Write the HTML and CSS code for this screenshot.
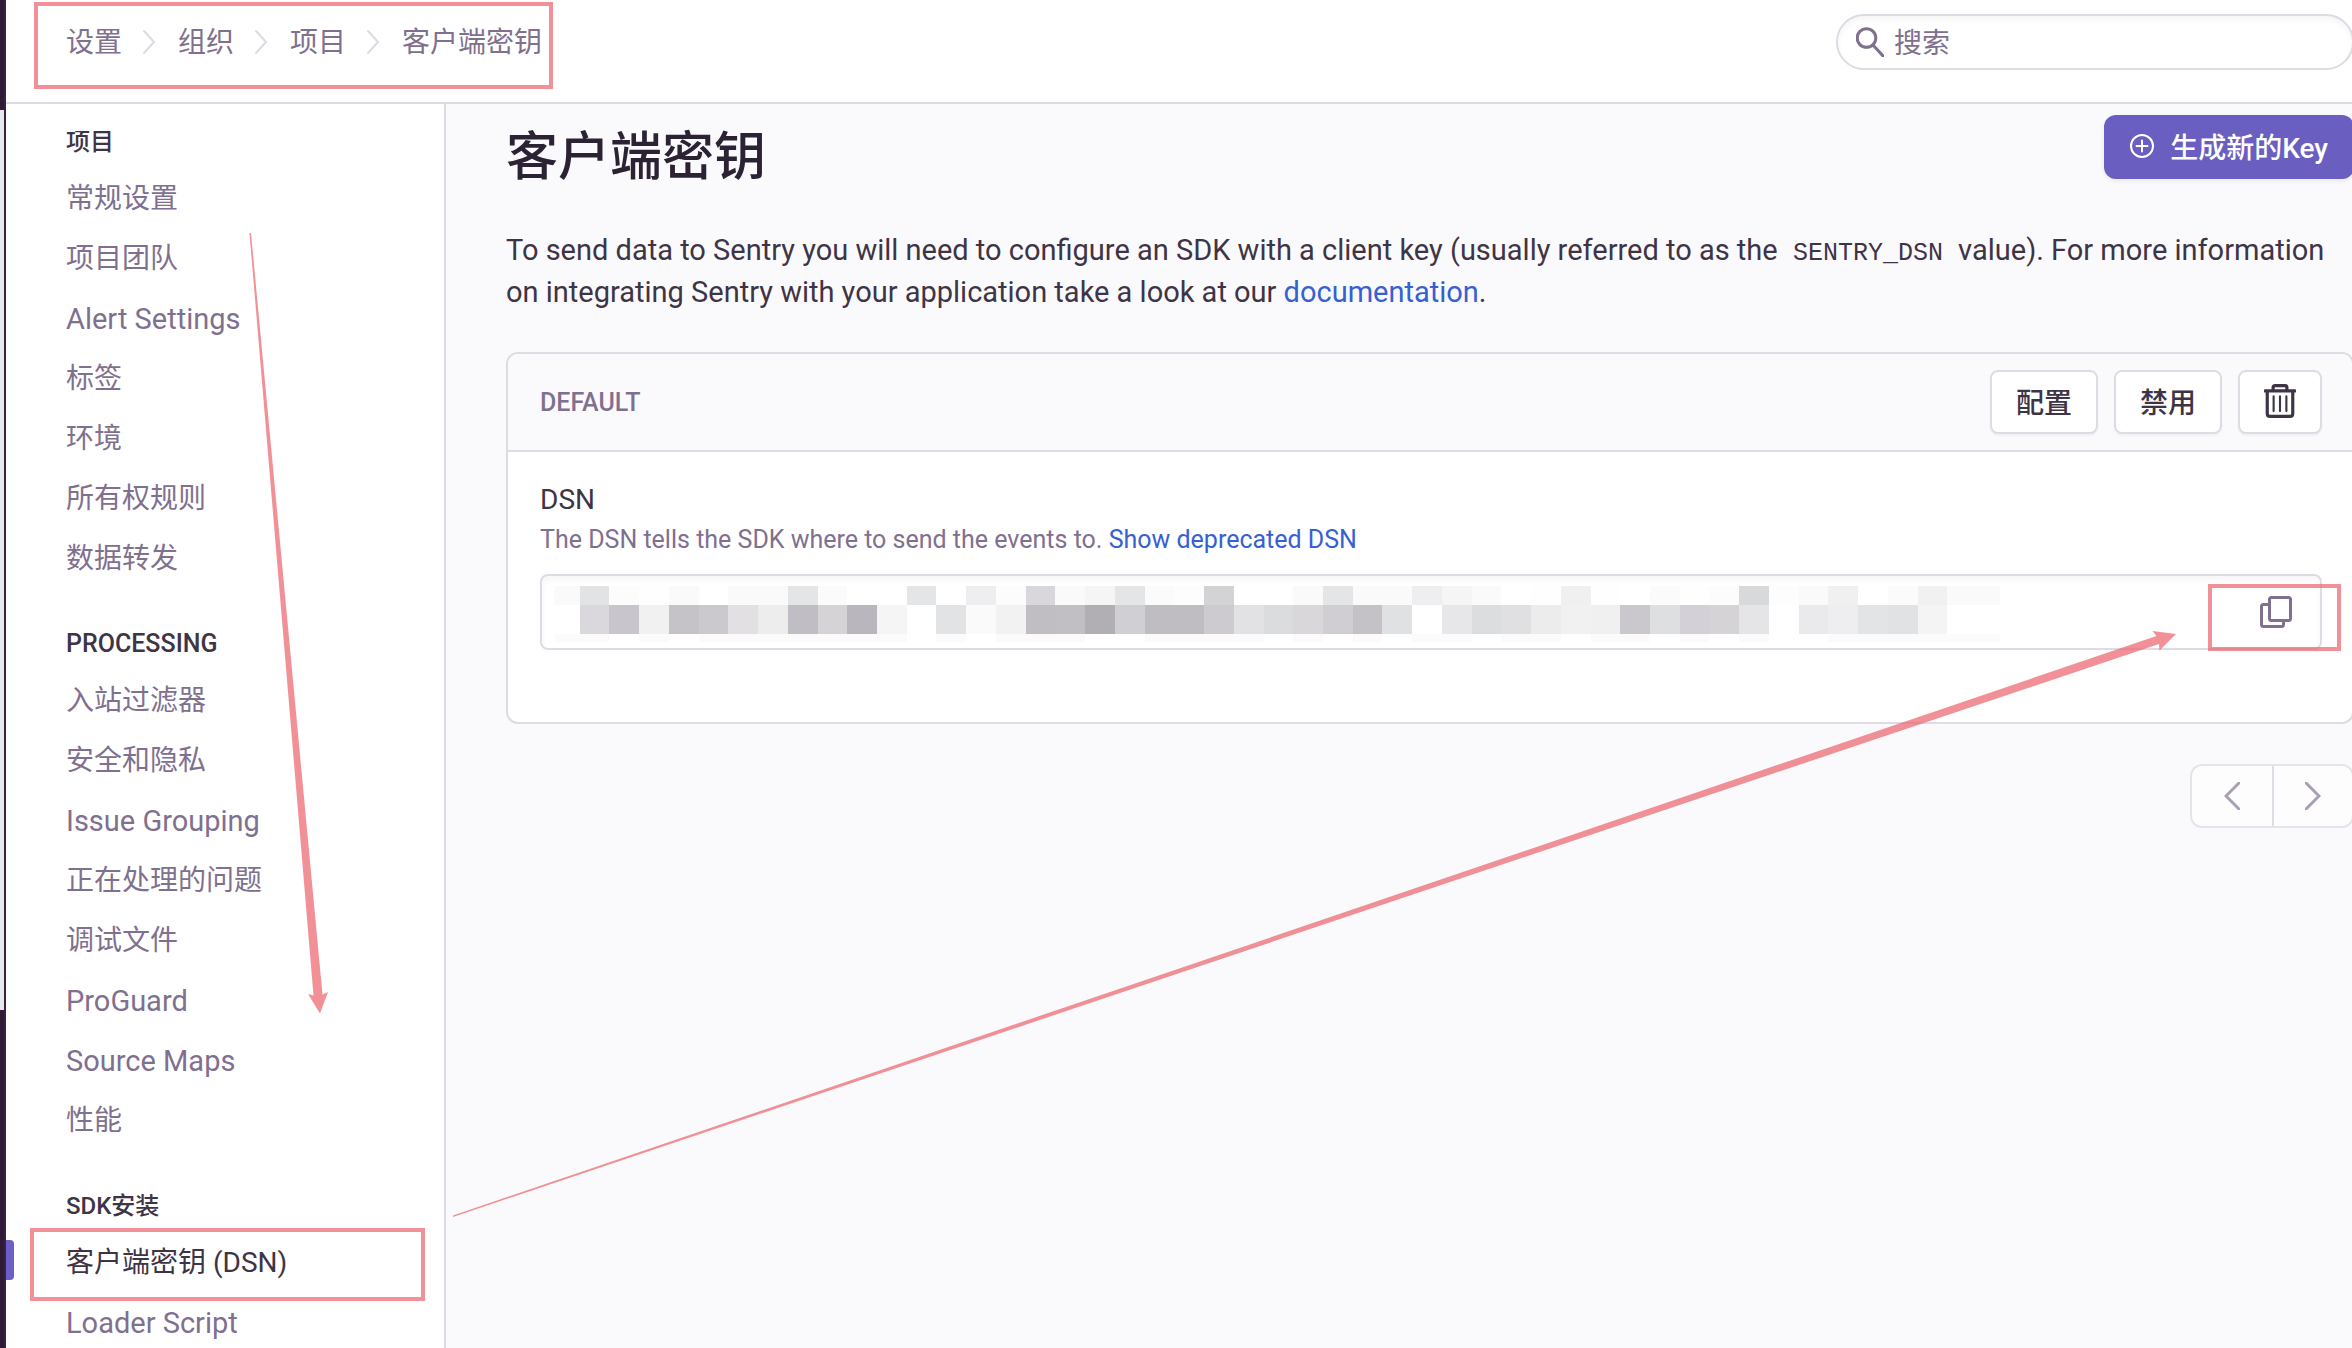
FILE: index.html
```
<!DOCTYPE html>
<html lang="zh-CN">
<head>
<meta charset="utf-8">
<title>客户端密钥</title>
<link rel="stylesheet" href="styles.css">
</head>
<body>
<div class="app">
  <div class="rail"><div class="rail-gap"></div></div>
  <div class="page">
    <header class="topbar">
      <nav class="crumbs" aria-label="路径">
        <a href="#">设置</a>
        <svg class="crumb-sep" viewBox="0 0 14 26"><path d="M2 2l10 11L2 24"/></svg>
        <a href="#">组织</a>
        <svg class="crumb-sep" viewBox="0 0 14 26"><path d="M2 2l10 11L2 24"/></svg>
        <a href="#">项目</a>
        <svg class="crumb-sep" viewBox="0 0 14 26"><path d="M2 2l10 11L2 24"/></svg>
        <a href="#">客户端密钥</a>
      </nav>
      <label class="search">
        <svg class="search-icon" viewBox="0 0 28 30"><circle cx="10.500" cy="11" r="9.300"/><path d="M17 18l10 11"/></svg>
        <input type="text" placeholder="搜索" aria-label="搜索">
      </label>
    </header>
    <div class="body">
      <nav class="sidebar" aria-label="项目设置">
        <h2>项目</h2>
        <ul>
          <li><a href="#">常规设置</a></li>
          <li><a href="#">项目团队</a></li>
          <li><a class="latin" href="#">Alert Settings</a></li>
          <li><a href="#">标签</a></li>
          <li><a href="#">环境</a></li>
          <li><a href="#">所有权规则</a></li>
          <li><a href="#">数据转发</a></li>
        </ul>
        <h2 class="latin">PROCESSING</h2>
        <ul>
          <li><a href="#">入站过滤器</a></li>
          <li><a href="#">安全和隐私</a></li>
          <li><a class="latin" href="#">Issue Grouping</a></li>
          <li><a href="#">正在处理的问题</a></li>
          <li><a href="#">调试文件</a></li>
          <li><a class="latin" href="#">ProGuard</a></li>
          <li><a class="latin" href="#">Source Maps</a></li>
          <li><a href="#">性能</a></li>
        </ul>
        <h2>SDK安装</h2>
        <ul>
          <li><a class="active" href="#" aria-current="page">客户端密钥 (DSN)</a></li>
          <li><a class="latin" href="#">Loader Script</a></li>
        </ul>
      </nav>
      <main class="content">
        <div class="title-row">
          <h1>客户端密钥</h1>
          <button class="primary" type="button">
            <svg class="plus-icon" viewBox="0 0 24 24"><circle cx="12" cy="12" r="11"/><path d="M12 6.500v11M6.500 12h11"/></svg>
            生成新的Key
          </button>
        </div>
        <p class="intro">To send data to Sentry you will need to configure an SDK with a client key (usually referred to as the <code>SENTRY_DSN</code> value). For more information on integrating Sentry with your application take a look at our <a href="#">documentation</a>.</p>
        <section class="panel">
          <div class="panel-head">
            <h3>DEFAULT</h3>
            <div class="actions">
              <button class="btn" type="button">配置</button>
              <button class="btn" type="button">禁用</button>
              <button class="btn" type="button" aria-label="删除">
                <svg class="trash-icon" viewBox="0 0 30 32"><path d="M1 6.500h28M8.500 6V3.500Q8.500 1.500 10.500 1.500h9Q21.500 1.500 21.500 3.500V6M3 7v21q0 2.500 2.500 2.500h19q2.500 0 2.500-2.500V7"/><path class="thin" d="M9 11.500v14M15 11.500v14M21 11.500v14"/></svg>
              </button>
            </div>
          </div>
          <div class="panel-body">
            <label class="field-label" for="dsn">DSN</label>
            <p class="help">The DSN tells the SDK where to send the events to. <a href="#">Show deprecated DSN</a></p>
            <div class="field">
              <input id="dsn" type="text" readonly>
              <svg class="mosaic" id="mosaic" viewBox="0 0 1446 56" shape-rendering="crispEdges"></svg>
              <button class="copy" type="button" aria-label="复制">
                <svg class="copy-icon" viewBox="0 0 32 32"><rect x="9.500" y="1.500" width="21" height="23" rx="2"/><path d="M9 8.500H3.500q-2 0-2 2v18q0 2 2 2h18q2 0 2-2V25"/></svg>
              </button>
            </div>
          </div>
        </section>
        <div class="pager">
          <button type="button" aria-label="上一页"><svg viewBox="0 0 16 28"><path d="M15 1L2 14l13 13"/></svg></button>
          <button type="button" aria-label="下一页"><svg viewBox="0 0 16 28"><path d="M1 1l13 13L1 27"/></svg></button>
        </div>
      </main>
    </div>
  </div>
  <svg class="marks" viewBox="0 0 2352 1348" aria-hidden="true">
    <path class="box" d="M36 4H551V87H36zM32 1230H423V1299H32zM2210 586H2339V649H2210z"/>
    <path class="arrow" d="M249.500 233L313.500 995.500L308 994L320 1013.500L328 992L322.500 994.500L251 233z"/>
    <path class="arrow" d="M453 1215.500L2156.500 636L2152.500 631L2176 634L2159.500 650.500L2159 644L453 1217z"/>
  </svg>
</div>
<script src="mosaic.js"></script>
</body>
</html>
```
FILE: mosaic.js
```
// Draws the redaction blocks over the key: three rows of grey cells.
const W = 'ffffff';
const rows = [
  { y: 0, h: 19, cells: ['fafafa','e2e3e5','fcfcfc','fefefe','fafafa',W,'fafafa','fafafa','e4e5e6','fbfbfb',W,W,'e4e5e6',W,'eeeef0','fcfcfc','d9d7dc','fafafa','f5f5f5','e4e5e6','fbfbfb','fdfdfd','d3d3d5',W,W,'fafafa','e4e5e6','fafafa','fafafa','eeeef0','f5f5f5','fafafa',W,'fefefe','f0f0f1','fefefe',W,'fbfbfb','fefefe','fcfcfc','d8d9da','fdfdfd','fafafa','f0f0f1',W,'fbfbfb','f1f1f1','fafafa','fafafa'] },
  { y: 19, h: 29, cells: [W,'dad8dc','c8c6cc','f1f1f1','c5c3c8','cbc9ce','e2e0e3','ededed','c0bec4','d6d3d7','b9b7bd','f5f5f5',W,'e2e3e5','fafafa','f2f2f3','c0bec3','c1bfc4','b1afb4','d0cfd4','bfbdc2','bfbdc2','cecbd0','e2e2e4','dbdcdd','dad7da','d0cdd3','c4c1c7','e0e1e2',W,'e7e7e9','dcdddf','e0e0e2','ececed','f1f1f1','f0f0f1','cac8cd','dedfe1','d3d1d7','d6d3d6','e5e5e8',W,'eaeaec','eeeef1','e3e4e5','e1e2e3','f4f4f4',W,W] },
  { y: 48, h: 8, cells: Array.from('1101011111110101110011110101011011011010100111111', c => c === '1' ? 'fbfbfb' : W) }
];
const svg = document.getElementById('mosaic');
const edge = k => Math.min(1446, Math.max(0, Math.round(29.73 * k - 4)));
for (const row of rows) {
  row.cells.forEach((c, k) => {
    const r = document.createElementNS('http://www.w3.org/2000/svg', 'rect');
    r.setAttribute('x', edge(k));
    r.setAttribute('y', row.y);
    r.setAttribute('width', edge(k + 1) - edge(k));
    r.setAttribute('height', row.h);
    r.setAttribute('fill', '#' + c);
    svg.appendChild(r);
  });
}
```
FILE: styles.css
```
* { box-sizing: border-box; }
body {
  margin: 0;
  font-family: Roboto, "Noto Sans CJK SC", sans-serif;
  font-size: 28px;
  color: #3e3446;
  background: #fff;
}
a { color: #3660d3; text-decoration: none; }
h1, h2, h3, p, ul { margin: 0; padding: 0; }
ul { list-style: none; }
button, input { font: inherit; color: inherit; }
svg { fill: none; flex: none; }

.app { position: relative; display: flex; height: 100vh; overflow: hidden; }
.rail { width: 6px; flex: none; background: #2f1b36; padding-top: 110px; border-right: 2px solid #3a2145; }
.rail-gap { height: 900px; background: #e9e7ee; }
.page { flex: 1; min-width: 0; display: flex; flex-direction: column; }

.topbar {
  height: 104px;
  flex: none;
  display: flex;
  justify-content: space-between;
  align-items: flex-start;
  padding: 14px 0 0 60px;
  border-bottom: 2px solid #dddbe3;
}
.crumbs { display: flex; align-items: center; height: 56px; }
.crumbs a { color: #80708f; line-height: 56px; padding-top: 2px; }
.crumb-sep { width: 14px; height: 26px; margin: 0 22px 0 20px; stroke: #dddbe3; stroke-width: 2; stroke-linecap: round; stroke-linejoin: round; }
.search {
  display: flex;
  align-items: center;
  width: 518px;
  height: 56px;
  margin-right: -2px;
  padding-left: 18px;
  border: 2px solid #dddbe3;
  border-radius: 28px;
  box-shadow: inset 0 4px 6px rgba(43, 34, 51, .04);
}
.search-icon { width: 28px; height: 30px; stroke: #80708f; stroke-width: 3; stroke-linecap: round; }
.search input { flex: 1; min-width: 0; margin-left: 10px; padding: 2px 0 0; border: 0; background: none; outline: 0; }
.search input::placeholder { color: #80708f; opacity: 1; }

.body { flex: 1; min-height: 0; display: flex; }
.sidebar { width: 440px; flex: none; padding-top: 20px; border-right: 2px solid #dddbe3; }
.sidebar h2 { padding-left: 60px; font-size: 24px; font-weight: 500; line-height: 36px; margin-bottom: 9px; }
.sidebar h2.latin { font-size: 25px; }
.sidebar ul { margin-bottom: 37px; }
.sidebar a { position: relative; display: block; padding-left: 60px; line-height: 60px; height: 60px; color: #80708f; }
.sidebar a.latin { font-size: 29px; }
.sidebar a.active { color: #3e3446; }
.sidebar a.active::before {
  content: "";
  position: absolute;
  left: 0;
  top: 7px;
  width: 8px;
  height: 40px;
  background: #6c5fc7;
  border-radius: 0 4px 4px 0;
}

.content { flex: 1; min-width: 0; padding: 11px 0 0 60px; margin-right: -2px; background: #fafafc; }
.title-row { display: flex; justify-content: space-between; align-items: flex-start; height: 114px; }
h1 { font-size: 52px; font-weight: 500; line-height: 86px; color: #2b2233; }
.primary {
  display: flex;
  align-items: center;
  gap: 16px;
  height: 64px;
  padding: 0 26px 2px;
  border: 0;
  border-radius: 12px;
  background: #6a5fc1;
  color: #fff;
  font-weight: 500;
  box-shadow: 0 2px 4px rgba(43, 34, 51, .08);
}
.plus-icon { width: 24px; height: 24px; stroke: #fff; stroke-width: 2; stroke-linecap: round; }
.intro { font-size: 29px; line-height: 42px; }
.intro code { font-family: "Liberation Mono", monospace; font-size: 25px; line-height: 1; padding: 0 8px; }

.panel { margin-top: 39px; border: 2px solid #dddbe3; border-radius: 12px; background: #fff; overflow: hidden; }
.panel-head {
  display: flex;
  justify-content: space-between;
  align-items: center;
  height: 98px;
  padding: 0 30px 0 32px;
  background: #fafafc;
  border-bottom: 2px solid #dddbe3;
}
h3 { font-size: 25px; font-weight: 500; color: #80708f; }
.actions { display: flex; gap: 16px; }
.btn {
  display: flex;
  align-items: center;
  justify-content: center;
  height: 64px;
  padding: 0 24px 2px;
  border: 2px solid #dddbe3;
  border-radius: 8px;
  background: #fff;
  font-weight: 500;
  box-shadow: 0 2px 2px rgba(43, 34, 51, .04);
}
.trash-icon { width: 32px; height: 34px; stroke: #3e3446; stroke-width: 3; stroke-linecap: round; }
.trash-icon .thin { stroke-width: 2; }
.panel-body { padding: 28px 30px 72px 32px; }
.field-label { display: block; line-height: 40px; }
.help { font-size: 25px; line-height: 40px; color: #80708f; }
.field {
  position: relative;
  display: flex;
  height: 76px;
  margin-top: 14px;
  border: 2px solid #dddbe3;
  border-radius: 8px;
  box-shadow: inset 0 4px 6px rgba(43, 34, 51, .04);
}
.field input { flex: 1; min-width: 0; border: 0; background: none; outline: 0; padding: 0 14px; }
.mosaic { position: absolute; left: 12px; top: 10px; width: 1446px; height: 56px; }
.copy { display: flex; align-items: center; justify-content: center; width: 88px; padding: 0; border: 0; background: none; }
.copy-icon { width: 32px; height: 32px; stroke: #80708f; stroke-width: 3; stroke-linejoin: round; }

.pager { display: flex; justify-content: flex-end; margin-top: 40px; }
.pager button {
  display: flex;
  align-items: center;
  justify-content: center;
  width: 84px;
  height: 64px;
  padding: 0;
  background: #fdfdfe;
  border: 2px solid #e6e4ea;
}
.pager button:first-child { border-radius: 12px 0 0 12px; border-right-color: #dddbe3; }
.pager button:last-child { width: 80px; border-left: 0; border-radius: 0 12px 12px 0; }
.pager svg { width: 16px; height: 28px; stroke: #a89fb3; stroke-width: 3; stroke-linecap: round; }

.marks { position: absolute; left: 0; top: 0; width: 2352px; height: 1348px; opacity: .68; pointer-events: none; }
.marks .box { stroke: #eb5e66; stroke-width: 4; }
.marks .arrow { fill: #eb5e66; }
```
